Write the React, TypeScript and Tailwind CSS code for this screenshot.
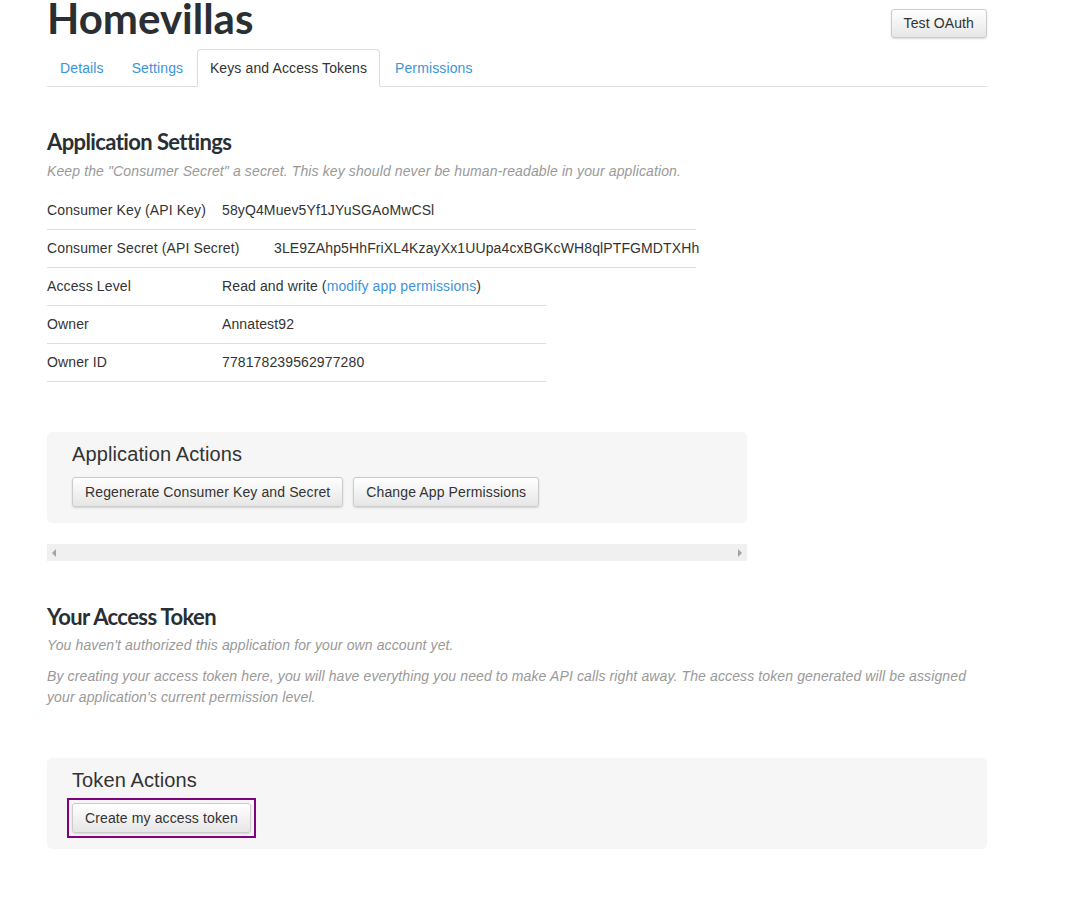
const body = { fontFamily: '"Liberation Sans", Arial, sans-serif', letterSpacing: "0.12px" };
const heading = { fontFamily: 'Lato, "Open Sans", sans-serif' };

const btn =
  "rounded-[3px] border border-[#cccccc] bg-gradient-to-b from-[#ffffff] to-[#e6e6e6] px-[12px] text-[14px] text-[#333333] shadow-[0_1px_2px_rgba(0,0,0,0.15)]";

function Row({
  label,
  value,
  labelW,
  lineW,
}: {
  label: string;
  value: React.ReactNode;
  labelW: string;
  lineW: string;
}) {
  return (
    <div className={`flex h-[38px] items-center border-b border-[#dddddd] ${lineW}`}>
      <div className={`shrink-0 ${labelW}`}>{label}</div>
      <div className="whitespace-nowrap">{value}</div>
    </div>
  );
}

export default function App() {
  return (
    <div className="min-h-[916px] bg-white text-[14px] text-[#333333]" style={body}>
      <div className="ml-[47px] w-[940px]">
        <div className="flex items-start justify-between">
          <h1
            className="-mt-[7px] text-[42px] font-bold leading-[50px] tracking-[0px] text-[#292f33]"
            style={heading}
          >
            Homevillas
          </h1>
          <button className={`mt-[9px] h-[29px] ${btn}`}>Test OAuth</button>
        </div>

        <div className="mt-[6px] flex h-[38px] border-b border-[#dddddd]">
          <div className="flex w-[150px] items-center px-[13px] pt-[1px] text-[#3b94d9]">
            <span>Details</span>
            <span className="ml-[28px]">Settings</span>
          </div>
          <div className="-mb-px flex w-[183px] items-center justify-center rounded-t-[4px] border border-b-white border-[#dddddd] bg-white pt-[1px]">
            Keys and Access Tokens
          </div>
          <div className="flex items-center pl-[15px] pt-[1px] text-[#3b94d9]">Permissions</div>
        </div>

        <h2
          className="mt-[42px] text-[22px] font-bold leading-[26px] tracking-[-0.6px] text-[#292f33]"
          style={heading}
        >
          Application Settings
        </h2>
        <p className="mt-[6px] italic text-[#999999]">
          Keep the "Consumer Secret" a secret. This key should never be human-readable in your application.
        </p>

        <div className="mt-[10px]">
          <Row label="Consumer Key (API Key)" value="58yQ4Muev5Yf1JYuSGAoMwCSl" labelW="w-[175px]" lineW="w-[649px]" />
          <Row
            label="Consumer Secret (API Secret)"
            value="3LE9ZAhp5HhFriXL4KzayXx1UUpa4cxBGKcWH8qlPTFGMDTXHh"
            labelW="w-[227px]"
            lineW="w-[649px]"
          />
          <Row
            label="Access Level"
            value={
              <>
                Read and write (<span className="text-[#3b94d9]">modify app permissions</span>)
              </>
            }
            labelW="w-[175px]"
            lineW="w-[499px]"
          />
          <Row label="Owner" value="Annatest92" labelW="w-[175px]" lineW="w-[499px]" />
          <Row label="Owner ID" value="778178239562977280" labelW="w-[175px]" lineW="w-[499px]" />
        </div>

        <div className="mt-[50px] w-[700px] rounded-[5px] bg-[#f6f6f6] px-[25px] pb-[16px] pt-[10px]">
          <h3 className="text-[20px] leading-[24px] text-[#333333]">Application Actions</h3>
          <div className="mt-[11px] flex gap-[10px]">
            <button className={`h-[30px] ${btn}`}>Regenerate Consumer Key and Secret</button>
            <button className={`h-[30px] ${btn}`}>Change App Permissions</button>
          </div>
        </div>

        <div className="mt-[21px] flex h-[17px] w-[700px] items-center justify-between bg-[#f0f0f0] px-[5px] text-[#a3a3a3]">
          <svg width="5" height="8" viewBox="0 0 5 8">
            <path d="M4 0 L0 4 L4 8 Z" fill="#a3a3a3" />
          </svg>
          <svg width="5" height="8" viewBox="0 0 5 8">
            <path d="M1 0 L5 4 L1 8 Z" fill="#a3a3a3" />
          </svg>
        </div>

        <h2
          className="mt-[43px] text-[22px] font-bold leading-[26px] tracking-[-0.6px] text-[#292f33]"
          style={heading}
        >
          Your Access Token
        </h2>
        <p className="mt-[5px] italic text-[#999999]">
          You haven't authorized this application for your own account yet.
        </p>
        <p className="mt-[10px] italic leading-[21px] text-[#999999]">
          By creating your access token here, you will have everything you need to make API calls right away. The
          access token generated will be assigned your application's current permission level.
        </p>

        <div className="mt-[50px] w-[940px] rounded-[5px] bg-[#f6f6f6] px-[20px] pb-[11px] pt-[10px]">
          <h3 className="ml-[5px] text-[20px] leading-[24px] text-[#333333]">Token Actions</h3>
          <div className="mt-[6px] inline-block border-2 border-[#800080] p-[3px]">
            <button className={`h-[30px] ${btn}`}>Create my access token</button>
          </div>
        </div>
      </div>
    </div>
  );
}
